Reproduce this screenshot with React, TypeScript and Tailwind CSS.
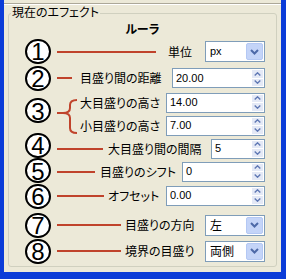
import React from "react";

function Num({ n, className = "" }: { n: string; className?: string }) {
  return (
    <div
      className={`w-[26px] h-[25px] shrink-0 rounded-full border-2 border-black bg-white flex items-center justify-center font-['Liberation_Sans',Arial,sans-serif] text-[24px] leading-none text-black ${className}`}
    >
      <span className="translate-y-[1px]">{n}</span>
    </div>
  );
}

function Spin({ value, w }: { value: string; w: string }) {
  return (
    <div className={`h-[20px] border border-[#7f9db9] bg-white flex items-stretch shrink-0 ${w}`}>
      <div className="flex-1 pl-[3px] flex items-center text-[11px] text-black font-['Liberation_Sans',Arial,sans-serif]">
        {value}
      </div>
      <div className="w-[11px] m-[1px] flex flex-col gap-[1px]">
        <div className="flex-1 bg-[#e4e9f6] flex items-center justify-center">
          <svg width="7" height="4" viewBox="0 0 7 4">
            <path d="M0.7 3.5 L3.5 0.8 L6.3 3.5" stroke="#5f78b4" strokeWidth="1.4" fill="none" />
          </svg>
        </div>
        <div className="flex-1 bg-[#e4e9f6] flex items-center justify-center">
          <svg width="7" height="4" viewBox="0 0 7 4">
            <path d="M0.7 0.5 L3.5 3.2 L6.3 0.5" stroke="#5f78b4" strokeWidth="1.4" fill="none" />
          </svg>
        </div>
      </div>
    </div>
  );
}

function Sel({ value, latin = false }: { value: string; latin?: boolean }) {
  return (
    <div className="w-[60px] h-[21px] border border-[#7f9db9] bg-white flex items-stretch shrink-0">
      <div
        className={`flex-1 pl-[4px] flex items-center text-black ${
          latin
            ? "text-[11px] font-['Liberation_Sans',Arial,sans-serif]"
            : "text-[12px] font-['Noto_Sans_CJK_JP',sans-serif]"
        }`}
      >
        {value}
      </div>
      <div className="w-[17px] m-[1px] rounded-[2px] bg-[#c4d4f8] border border-[#b4c8f4] flex items-center justify-center">
        <svg width="9" height="6" viewBox="0 0 9 6">
          <path d="M1 1 L4.5 4.5 L8 1" stroke="#4d69a8" strokeWidth="2" fill="none" />
        </svg>
      </div>
    </div>
  );
}

const label =
  "shrink-0 text-[12px] leading-none text-black whitespace-nowrap font-['Noto_Sans_CJK_JP',sans-serif] [font-feature-settings:'palt']";

export default function App() {
  return (
    <div className="w-[286px] h-[279px] bg-[#0b3cd8] pl-[4px] pr-[5px] pb-[7px]">
      <div className="w-full h-full bg-[#ece9d8] flex flex-col">
        <div className="h-[3px] shrink-0" />
        <div className="h-[1px] bg-[#aca899] shrink-0" />
        <div className="h-[1px] bg-white shrink-0" />
        <fieldset className="mt-[1px] mx-[4px] border border-[#d0d0bf] rounded-[3px] pb-[2px] min-w-0">
          <legend className={`ml-[2px] px-[1px] h-[14px] leading-[14px] ${label}`}>現在のエフェクト</legend>
          <div className={`h-[18px] flex items-center justify-center font-bold ${label}`}>ルーラ</div>

          <div className="flex flex-col pl-[16px] pr-[11px]">
            {/* 1 */}
            <div className="h-[27px] flex items-center">
              <Num n="1" className="-mt-[1px]" />
              <div className="ml-[6px] mr-[12px] h-[2px] flex-1 bg-[#c0432b]" />
              <div className={`w-[37px] ${label}`}>単位</div>
              <Sel value="px" latin />
            </div>
            {/* 2 */}
            <div className="h-[26px] flex items-center">
              <Num n="2" />
              <div className="ml-[6px] mr-[8px] h-[2px] flex-1 bg-[#c0432b]" />
              <div className={`w-[92px] ${label}`}>目盛り間の距離</div>
              <Spin value="20.00" w="w-[93px]" />
            </div>
            {/* 3 */}
            <div className="h-[46px] flex items-start">
              <Num n="3" className="mt-[7px]" />
              <svg width="23" height="46" viewBox="0 0 23 46" className="ml-[6px] shrink-0">
                <path d="M0 22 H7" stroke="#c0432b" strokeWidth="2" fill="none" />
                <path
                  d="M6 22 Q13 22 13 17 V14 Q13 9 20 9 M6 22 Q13 22 13 27 V37 Q13 42 20 42"
                  stroke="#c0432b"
                  strokeWidth="2"
                  fill="none"
                />
              </svg>
              <div className="flex-1 flex flex-col">
                <div className="h-[23px] flex items-center justify-end">
                  <div className={`w-[86px] ${label}`}>大目盛りの高さ</div>
                  <Spin value="14.00" w="w-[99px]" />
                </div>
                <div className="h-[23px] flex items-center justify-end">
                  <div className={`w-[86px] ${label}`}>小目盛りの高さ</div>
                  <Spin value="7.00" w="w-[99px]" />
                </div>
              </div>
            </div>
            {/* 4 */}
            <div className="h-[23px] flex items-center">
              <Num n="4" className="-mt-[7px]" />
              <div className="ml-[6px] mr-[5px] h-[2px] flex-1 bg-[#c0432b]" />
              <div className={`w-[103px] ${label}`}>大目盛り間の間隔</div>
              <Spin value="5" w="w-[54px]" />
            </div>
            {/* 5 */}
            <div className="h-[23px] flex items-center">
              <Num n="5" className="-mt-[2px]" />
              <div className="ml-[6px] mr-[5px] h-[2px] flex-1 bg-[#c0432b]" />
              <div className={`w-[82px] ${label}`}>目盛りのシフト</div>
              <Spin value="0" w="w-[83px]" />
            </div>
            {/* 6 */}
            <div className="h-[25px] flex items-center">
              <Num n="6" className="mt-[1px]" />
              <div className="ml-[6px] mr-[4px] h-[2px] flex-1 bg-[#c0432b]" />
              <div className={`w-[58px] ${label}`}>オフセット</div>
              <Spin value="0.00" w="w-[99px]" />
            </div>
            <div className="h-[4px]" />
            {/* 7 */}
            <div className="h-[26px] flex items-center">
              <Num n="7" />
              <div className="ml-[6px] mr-[4px] h-[2px] flex-1 bg-[#c0432b]" />
              <div className={`w-[80px] ${label}`}>目盛りの方向</div>
              <Sel value="左" />
            </div>
            {/* 8 */}
            <div className="h-[26px] flex items-center">
              <Num n="8" />
              <div className="ml-[6px] mr-[4px] h-[2px] flex-1 bg-[#c0432b]" />
              <div className={`w-[80px] ${label}`}>境界の目盛り</div>
              <Sel value="両側" />
            </div>
          </div>
        </fieldset>
      </div>
    </div>
  );
}
